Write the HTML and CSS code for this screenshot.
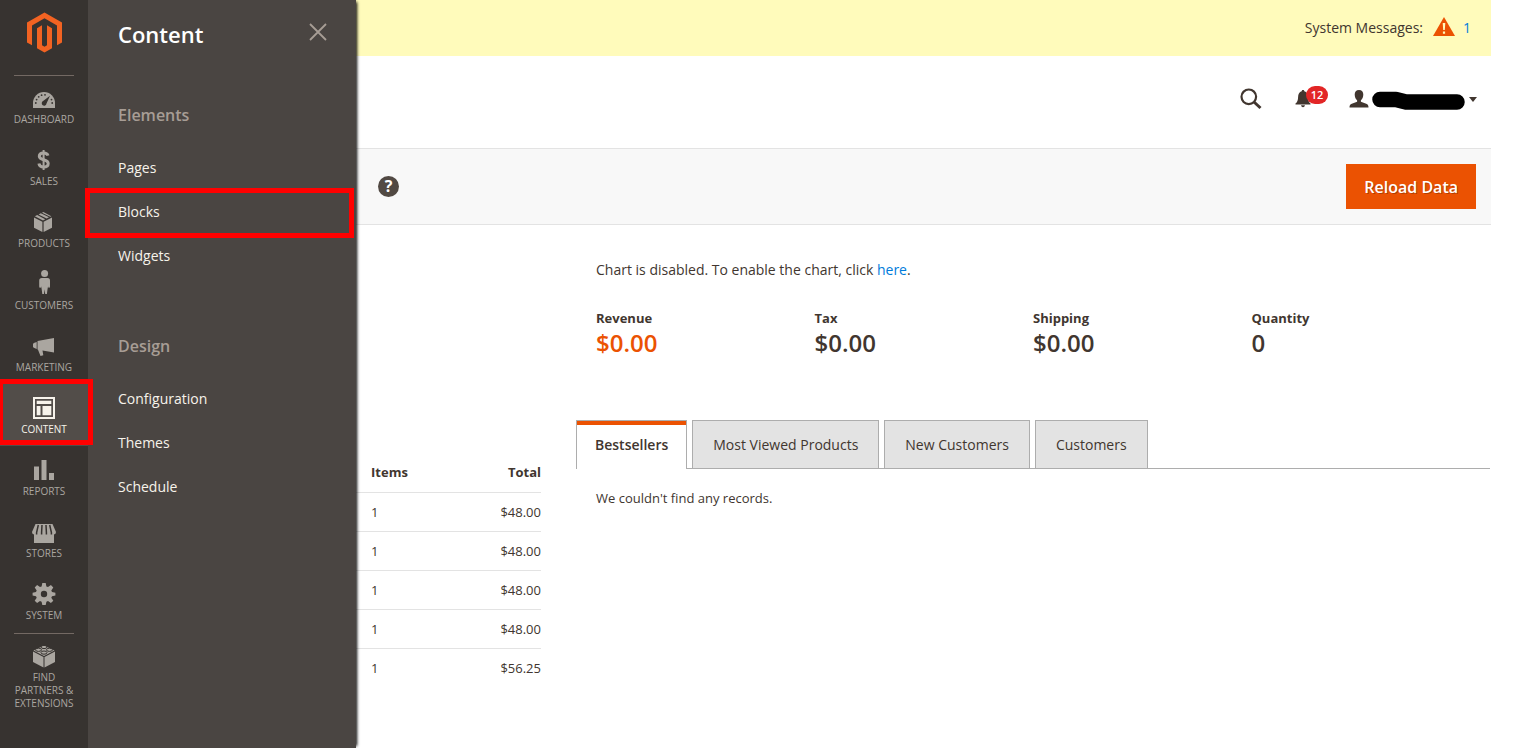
FILE: index.html
```html
<!DOCTYPE html>
<html lang="en">
<head>
<meta charset="utf-8">
<title>Dashboard / Magento Admin</title>
<link rel="stylesheet" href="styles.css">
</head>
<body>
<div class="layout">
  <nav class="menu" aria-label="Main menu">
    <a class="logo" href="#" aria-label="Magento Admin">
      <svg width="36" height="42" viewBox="26 12 36 42"><path d="M44.5 12.5 62 22.5V42.5L57 45.3V25.5L44.5 18.3 32 25.5V45.3L27 42.5V22.5z"/><path d="M37 28.2 42 25.3V45.3L44.5 46.8 47 45.3V25.3L52 28.2V48.2L44.5 52.5 37 48.2z"/></svg>
    </a>
    <ul class="menu-list">
      <li class="ruled"><a class="menu-link" href="#"><svg class="ico" viewBox="0 0 40 30"><path d="M9 26V21a11 11 0 0 1 22 0v5z"/><g class="cut"><circle cx="11.8" cy="21" r=".9"/><circle cx="12.6" cy="17.6" r=".9"/><circle cx="14.7" cy="14.8" r=".9"/><circle cx="17.6" cy="13.2" r=".9"/><circle cx="21" cy="12.8" r=".9"/><circle cx="28.2" cy="21" r=".9"/><circle cx="27.5" cy="17.6" r=".9"/><path d="M26 13.8 22.5 21.5a2.4 2.4 0 1 1-3.4-2.4z"/></g></svg><span>DASHBOARD</span></a></li>
      <li><a class="menu-link" href="#"><svg class="ico" viewBox="0 0 40 30"><path class="line" d="M24 11.6C23.4 9.6 21.700 8.900 19.600 8.900C17 8.900 15.300 10.200 15.300 12.200C15.300 14.300 17.200 15 19.600 15.700C22.200 16.400 24.200 17.200 24.200 19.600C24.200 21.900 22.200 23.100 19.600 23.100C17 23.100 15.300 22 14.900 19.600"/><path d="M18.600 6h2v20h-2z"/></svg><span>SALES</span></a></li>
      <li><a class="menu-link" href="#"><svg class="ico" viewBox="0 0 40 30"><path d="M10 11.500 18.400 15.800V26L10 21.700zM28 11.500 19.600 15.800V26L28 21.700zM10.800 10.300 13.200 9.100 21.200 13.200 19 14.400zM14.600 8.400 16.800 7.300 25 11.200 22.600 12.500zM18 6.700 19.400 6 27.300 10.200 26.200 10.700z"/></svg><span>PRODUCTS</span></a></li>
      <li><a class="menu-link" href="#"><svg class="ico" viewBox="0 0 40 30"><circle cx="20.600" cy="5.600" r="3.500"/><path d="M17.800 10h5.700c1.800 0 2.500 1 2.500 2.800v5.400c0 2-1.900 2-1.900 0l-.5 2.500-.7 5.300h-1.700l-.6-4.800-.6 4.800h-1.700l-.7-5.300-.5-2.500c0 2-1.900 2-1.900 0v-5.400c0-1.800.8-2.800 2.600-2.800z"/></svg><span>CUSTOMERS</span></a></li>
      <li><a class="menu-link" href="#"><svg class="ico" viewBox="0 0 40 30"><path d="M13.500 11 30 8V22.500L18.500 20.500 19.300 25.300 16.500 26 14 19.800 13.500 19.600zM12.700 12v7L9.800 17.800 9 17V14l.8-1z"/></svg><span>MARKETING</span></a></li>
      <li><a class="menu-link active" href="#"><svg class="ico" viewBox="0 0 40 30"><path fill-rule="evenodd" d="M9 5H31V27H9zM11 7V25H29V7z"/><path d="M12.700 8.700H27.300V12H12.700zM12.700 14H16.500V23.300H12.700zM18.500 14H27.300V23.300H18.500z"/></svg><span>CONTENT</span></a></li>
      <li><a class="menu-link" href="#"><svg class="ico" viewBox="0 0 40 30"><path d="M10 12.500H15V26H10zM17.500 6H22.500V26H17.500zM25 19H30V26H25z"/></svg><span>REPORTS</span></a></li>
      <li><a class="menu-link" href="#"><svg class="ico" viewBox="0 0 40 30"><path d="M11.500 8H28.500L32 16a2.400 2.400 0 0 1-2 2.400V27H10V18.400A2.400 2.400 0 0 1 8 16z"/><path class="gap" d="M14.300 9 12.600 16.500v2M18 9 17.600 16.500v2M22 9 22.400 16.500v2M25.700 9 27.400 16.500v2"/></svg><span>STORES</span></a></li>
      <li><a class="menu-link" href="#"><svg class="ico" viewBox="0 0 40 30"><path d="M18.300 5h3.400l.7 3.400 1.600.7 2.900-2 2.400 2.400-2 2.900.7 1.600 3.400.7v2.800l-3.400.7-.7 1.600 2 2.900-2.400 2.400-2.900-2-1.600.7-.7 3.200h-3.400l-.7-3.200-1.600-.7-2.900 2-2.400-2.400 2-2.900-.7-1.600L8.600 17.500v-2.800l3.400-.7.7-1.600-2-2.900 2.400-2.400 2.900 2 1.600-.7z"/><circle class="cut" cx="20" cy="16" r="3.200"/></svg><span>SYSTEM</span></a></li>
      <li class="ruled"><a class="menu-link" href="#"><svg class="ico" viewBox="0 0 40 30"><path d="M9 11.500 19.500 17V27.500L9 22zM31 11.500 20.500 17V27.500L31 22zM9.500 10.400 20 5.500 30.500 10.400 20 15.900z"/><g class="stud"><ellipse cx="20" cy="7" rx="3" ry="1.600"/><ellipse cx="14.500" cy="9.800" rx="3" ry="1.600"/><ellipse cx="25.500" cy="9.800" rx="3" ry="1.600"/><ellipse cx="20" cy="12.600" rx="3" ry="1.600"/></g></svg><span>FIND PARTNERS &amp; EXTENSIONS</span></a></li>
    </ul>
    <div class="mark mark-menu"></div>
  </nav>

  <aside class="submenu">
    <header class="submenu-head">
      <h2 class="submenu-title">Content</h2>
      <button class="close" type="button" aria-label="Close"><svg width="18" height="18" viewBox="0 0 18 18"><path d="M1 1 17 17M17 1 1 17"/></svg></button>
    </header>
    <section class="group">
      <h3 class="group-title">Elements</h3>
      <ul class="group-list">
        <li><a href="#">Pages</a></li>
        <li class="marked"><a href="#">Blocks</a><div class="mark mark-item"></div></li>
        <li><a href="#">Widgets</a></li>
      </ul>
    </section>
    <section class="group">
      <h3 class="group-title">Design</h3>
      <ul class="group-list">
        <li><a href="#">Configuration</a></li>
        <li><a href="#">Themes</a></li>
        <li><a href="#">Schedule</a></li>
      </ul>
    </section>
  </aside>

  <main class="page">
    <div class="messages">
      <span>System Messages:</span>
      <svg width="22" height="20" viewBox="0 0 22 20"><path fill="#eb5202" d="M11 0 22 19H0z"/><path fill="#fffbbb" d="M9.700 6h2.600l-.5 7h-1.600zM9.900 14.500h2.200v2.200H9.900z"/></svg>
      <a href="#">1</a>
    </div>
    <header class="topbar">
      <button class="tool" type="button" aria-label="Search"><svg width="22" height="22" viewBox="0 0 22 22"><circle cx="8.800" cy="8.800" r="7.300" fill="none" stroke="#41362f" stroke-width="2.200"/><path d="M14 14 20.500 20" stroke="#41362f" stroke-width="3"/></svg></button>
      <button class="tool bell" type="button" aria-label="Notifications"><svg width="16" height="18" viewBox="0 0 16 18"><path fill="#41362f" d="M8 0c.9 0 1.200.5 1.300 1.200C12 2 12.800 4.200 12.900 7c.1 3.500.8 5.200 2.600 6.500v1H.5v-1C2.300 12.200 3 10.500 3.100 7 3.200 4.200 4 2 6.700 1.200 6.800.5 7.100 0 8 0zM6 15.300h4c-.3 1.300-1 1.900-2 1.900s-1.700-.6-2-1.900z"/></svg><span class="badge">12</span></button>
      <button class="tool account" type="button" aria-label="Account">
        <svg width="20" height="18" viewBox="0 0 20 18"><path fill="#41362f" d="M10 0c2.900 0 4.300 1.800 4.300 4.500 0 2.500-1 4.800-2.400 5.700v1.600l5.300 2c1.600.6 2.300 1.600 2.300 3.700H.5c0-2.100.7-3.100 2.300-3.700l5.300-2v-1.600C6.700 9.300 5.700 7 5.700 4.500 5.700 1.800 7.100 0 10 0z"/></svg>
        <svg width="94" height="24" viewBox="0 0 94 24"><path d="M9 12.500H25L35 15H86" fill="none" stroke="#000" stroke-width="15.500" stroke-linecap="round" stroke-linejoin="round"/></svg>
        <svg class="caret" width="8" height="5" viewBox="0 0 8 5"><path fill="#41362f" d="M0 0h8L4 5z"/></svg>
      </button>
    </header>
    <div class="actions">
      <button class="help" type="button" aria-label="Help"><span>?</span></button>
      <button class="primary" type="button">Reload Data</button>
    </div>

    <div class="dashboard">
      <table class="orders">
        <thead><tr><th>Items</th><th>Total</th></tr></thead>
        <tbody>
          <tr><td>1</td><td>$48.00</td></tr>
          <tr><td>1</td><td>$48.00</td></tr>
          <tr><td>1</td><td>$48.00</td></tr>
          <tr><td>1</td><td>$48.00</td></tr>
          <tr><td>1</td><td>$56.25</td></tr>
        </tbody>
      </table>
      <section class="stats">
        <p class="notice">Chart is disabled. To enable the chart, click <a href="#">here</a>.</p>
        <dl class="totals">
          <div><dt>Revenue</dt><dd class="accent">$0.00</dd></div>
          <div><dt>Tax</dt><dd>$0.00</dd></div>
          <div><dt>Shipping</dt><dd>$0.00</dd></div>
          <div><dt>Quantity</dt><dd>0</dd></div>
        </dl>
        <div class="tabs" role="tablist">
          <button class="tab current" type="button" role="tab" aria-selected="true">Bestsellers</button>
          <button class="tab" type="button" role="tab">Most Viewed Products</button>
          <button class="tab" type="button" role="tab">New Customers</button>
          <button class="tab" type="button" role="tab">Customers</button>
        </div>
        <p class="empty">We couldn't find any records.</p>
      </section>
    </div>
  </main>
</div>
</body>
</html>
```
FILE: styles.css
```css
* { box-sizing: border-box; }
body {
  margin: 0;
  font: 14px/20px "Open Sans", "Noto Sans", sans-serif;
  color: #41362f;
  background: #fff;
}
h2, h3, ul, dl, dd, p { margin: 0; padding: 0; }
ul { list-style: none; }
a { color: #007bdb; text-decoration: none; }
button { font: inherit; color: inherit; padding: 0; border: 0; background: none; }
svg { display: block; flex: none; }

.layout { display: flex; min-height: 100vh; }

.menu { position: relative; flex: none; width: 88px; background: #373330; }
.logo { display: flex; justify-content: center; height: 74px; padding-top: 12px; }
.logo path { fill: #f26322; }
.ruled { position: relative; }
.ruled::before {
  content: "";
  position: absolute;
  top: 1px;
  left: 14px;
  right: 14px;
  height: 1px;
  background: #736963;
}
.menu-link {
  display: flex;
  flex-direction: column;
  align-items: center;
  gap: 1px;
  min-height: 62px;
  padding: 8px 8px 10px;
  font-size: 10px;
  line-height: 13px;
  text-align: center;
  color: #aaa6a0;
}
.menu-link.active { background: #524d49; color: #f7f3eb; }
.ico { width: 40px; height: 30px; fill: currentColor; }
.ico .cut { fill: #373330; }
.ico .line { fill: none; stroke: currentColor; stroke-width: 3; }
.ico .gap { fill: none; stroke: #373330; stroke-width: 1.5; }
.ico .stud ellipse { stroke: #373330; stroke-width: 1; }

.mark { position: absolute; z-index: 6; border: 5px solid #f00; pointer-events: none; }
.mark-menu { top: 379px; left: -2px; width: 95px; height: 66px; }
.mark-item { top: -2px; left: -3px; right: 2px; height: 50px; }

.submenu {
  position: relative;
  flex: none;
  width: 268px;
  background: #4a4542;
  box-shadow: 3px 0 3px -2px #000;
}
.submenu-head { display: flex; justify-content: space-between; padding: 19px 29px 56px 30px; }
.submenu-title { font-size: 22px; line-height: 30px; font-weight: 600; color: #fff; }
.close { align-self: flex-start; padding-top: 4px; }
.close path { stroke: #a79d95; stroke-width: 1.800; }
.group { margin-bottom: 58px; }
.group-title { padding: 0 30px; margin-bottom: 21px; font-size: 16px; line-height: 20px; font-weight: 600; color: #a79d95; }
.group-list a { display: block; padding: 12px 30px; color: #f7f3eb; }
.marked { position: relative; }

.page { flex: 1; min-width: 0; margin-right: 30px; }
.messages {
  display: flex;
  justify-content: flex-end;
  align-items: center;
  gap: 8px;
  height: 56px;
  padding-right: 20px;
  background: #fffbbb;
}
.messages svg { margin: 0 0 2px 2px; }
.messages a { color: #007bdb; }
.topbar { display: flex; justify-content: flex-end; align-items: center; height: 92px; padding: 0 14px 6px; }
.bell { position: relative; margin: 0 38px 0 33px; }
.badge {
  position: absolute;
  top: -4px;
  left: 11px;
  width: 22px;
  border-radius: 9px;
  background: #e22626;
  color: #fff;
  font-size: 11px;
  line-height: 18px;
  font-weight: 600;
}
.account { display: flex; align-items: center; gap: 2px; }
.caret { margin-left: 2px; }
.actions {
  display: flex;
  justify-content: space-between;
  align-items: center;
  padding: 15px 15px 15px 22px;
  background: #f8f8f8;
  border: solid #e3e3e3;
  border-width: 1px 0;
}
.help { width: 21px; height: 21px; border-radius: 50%; background: #514943; color: #fff; font-size: 16px; line-height: 21px; font-weight: 700; }
.primary {
  padding: 13px 18px 11px;
  background: #eb5202;
  color: #fff;
  font-size: 16px;
  line-height: 21px;
  font-weight: 600;
  text-shadow: 1px 1px 0 rgba(0, 0, 0, .25);
}

.dashboard { display: flex; gap: 35px; align-items: flex-start; padding: 35px 1px 0 0; }
.orders { flex: none; width: 185px; margin-top: 192px; border-collapse: collapse; font-size: 13px; line-height: 18px; }
.orders th, .orders td { padding: 10px 0 10px 15px; text-align: left; }
.orders th { padding-top: 11px; padding-bottom: 11px; font-weight: 700; }
.orders tr > :last-child { padding-left: 0; text-align: right; }
.orders tbody tr { border-top: 1px solid #e3e3e3; }

.stats { flex: 1; min-width: 0; }
.notice { padding: 0 20px; }
.totals { display: grid; grid-template-columns: repeat(4, 1fr); padding: 29px 20px 61px; }
.totals dt { font-size: 13px; line-height: 18px; font-weight: 700; }
.totals dd { font-size: 24px; line-height: 32px; font-weight: 600; }
.totals .accent { color: #eb5202; }
.tabs { display: flex; gap: 5px; border-bottom: 1px solid #adadad; }
.tab { height: 48px; padding: 0 20px; border: 1px solid #adadad; border-bottom: 0; background: #e3e3e3; }
.current { margin-bottom: -1px; height: 49px; padding: 0 18px; background: #fff; font-weight: 600; box-shadow: inset 0 4px 0 #eb5202; }
.empty { padding: 19px 20px; font-size: 13px; }
```
